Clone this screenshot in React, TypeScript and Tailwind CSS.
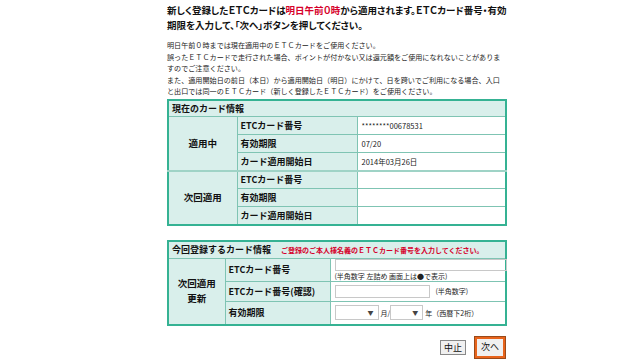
import React from "react";

const jp = "font-['Noto_Sans_CJK_JP','Noto_Sans',sans-serif]";

function Sel({ w }: { w: string }) {
  return (
    <span className={`inline-flex items-center justify-end ${w} h-[15px] border border-[#c8c8c8] bg-white pr-[4px] text-[6px] text-[#444]`}>▼</span>
  );
}

export default function App() {
  const th = "border border-[#7fc4b3] bg-[#d9efeb] font-bold text-[9px] text-[#111] text-left pl-[3px] whitespace-nowrap";
  const td = "border border-[#7fc4b3] bg-white text-[7.5px] text-[#222] text-left pl-[4px]";
  const grp = "border border-[#7fc4b3] bg-[#d9efeb] font-bold text-[9.5px] text-[#111] text-center";
  return (
    <div className={`w-[640px] h-[360px] bg-white overflow-hidden ${jp}`}>
      <div className="ml-[167px] w-[340px] pt-[3px]">
        <div className="font-bold text-[9.5px] leading-[15px] text-[#111] whitespace-nowrap [font-feature-settings:'palt']">
          新しく登録したＥＴＣカードは<span className="text-[#d6002a]">明日午前０時</span>から適用されます。ＥＴＣカード番号・有効
          <br />
          期限を入力して、「次へ」ボタンを押してください。
        </div>
        <div className="mt-[7px] text-[7.1px] leading-[11.5px] text-[#222] whitespace-nowrap">
          <div>明日午前０時までは現在適用中のＥＴＣカードをご使用ください。</div>
          <div>誤ったＥＴＣカードで走行された場合、ポイントが付かない又は還元額をご使用になれないことがありま</div>
          <div>すのでご注意ください。</div>
          <div>また、適用開始日の前日（本日）から適用開始日（明日）にかけて、日を跨いでご利用になる場合、入口</div>
          <div>と出口では同一のＥＴＣカード（新しく登録したＥＴＣカード）をご使用ください。</div>
        </div>

        <table className="mt-[1px] w-[340px] border-collapse border-2 border-[#35b293] table-fixed">
          <colgroup>
            <col className="w-[69px]" />
            <col className="w-[120px]" />
            <col />
          </colgroup>
          <tbody>
            <tr className="h-[17px]">
              <td colSpan={3} className={`${th} bg-[#d3ebe7]`}>現在のカード情報</td>
            </tr>
            <tr className="h-[18px]">
              <td rowSpan={3} className={grp}>適用中</td>
              <td className={th}>ETCカード番号</td>
              <td className={td}>********00678531</td>
            </tr>
            <tr className="h-[18px]">
              <td className={th}>有効期限</td>
              <td className={td}>07/20</td>
            </tr>
            <tr className="h-[18px]">
              <td className={th}>カード適用開始日</td>
              <td className={td}>2014年03月26日</td>
            </tr>
            <tr className="h-[18px]">
              <td rowSpan={3} className={`${grp} border-t-2 border-t-[#9fd3c6]`}>次回適用</td>
              <td className={`${th} border-t-2 border-t-[#9fd3c6]`}>ETCカード番号</td>
              <td className={`${td} border-t-2 border-t-[#9fd3c6]`}></td>
            </tr>
            <tr className="h-[18px]">
              <td className={th}>有効期限</td>
              <td className={td}></td>
            </tr>
            <tr className="h-[18px]">
              <td className={th}>カード適用開始日</td>
              <td className={td}></td>
            </tr>
          </tbody>
        </table>

        <table className="mt-[14px] w-[340px] border-collapse border-2 border-[#35b293] table-fixed">
          <colgroup>
            <col className="w-[57px]" />
            <col className="w-[105px]" />
            <col />
          </colgroup>
          <tbody>
            <tr className="h-[18px]">
              <td colSpan={3} className={`${th} bg-[#d3ebe7]`}>
                今回登録するカード情報<span className="ml-[10px] text-[7px] text-[#d6002a]">ご登録のご本人様名義のＥＴＣカード番号を入力してください。</span>
              </td>
            </tr>
            <tr className="h-[23px]">
              <td rowSpan={3} className={`${grp} leading-[15px]`}>次回適用<br />更新</td>
              <td className={th}>ETCカード番号</td>
              <td className={`${td} pl-[2px]`}>
                <div className="flex flex-col">
                  <span className="block w-[172px] h-[12px] border border-[#c8c8c8]"></span>
                  <span className="text-[7px] leading-[10px] whitespace-nowrap">(半角数字 左詰め 画面上は●で表示)</span>
                </div>
              </td>
            </tr>
            <tr className="h-[20px]">
              <td className={th}>ETCカード番号(確認)</td>
              <td className={`${td} pl-[2px]`}>
                <div className="flex items-center">
                  <span className="block w-[95px] h-[13px] border border-[#c8c8c8]"></span>
                  <span className="ml-[6px] text-[7px]">(半角数字)</span>
                </div>
              </td>
            </tr>
            <tr className="h-[23px]">
              <td className={th}>有効期限</td>
              <td className={`${td} pl-[2px]`}>
                <div className="flex items-center text-[7px]">
                  <Sel w="w-[44px]" />
                  <span className="ml-[2px]">月/</span>
                  <Sel w="w-[33px]" />
                  <span className="ml-[2px]">年（西暦下2桁）</span>
                </div>
              </td>
            </tr>
          </tbody>
        </table>

        <div className="mt-[11px] flex justify-end items-center gap-[9px] pr-[2px]">
          <button className="h-[15px] px-[3px] border border-[#888] bg-[#f0f0f0] text-[9px] leading-[13px] text-[#111]">中止</button>
          <button className="h-[21px] px-[4px] border-2 border-[#e8641c] bg-[#f0f0f0] text-[9px] text-[#111] outline outline-1 outline-[#9a4a1a]">次へ</button>
        </div>
      </div>
    </div>
  );
}
